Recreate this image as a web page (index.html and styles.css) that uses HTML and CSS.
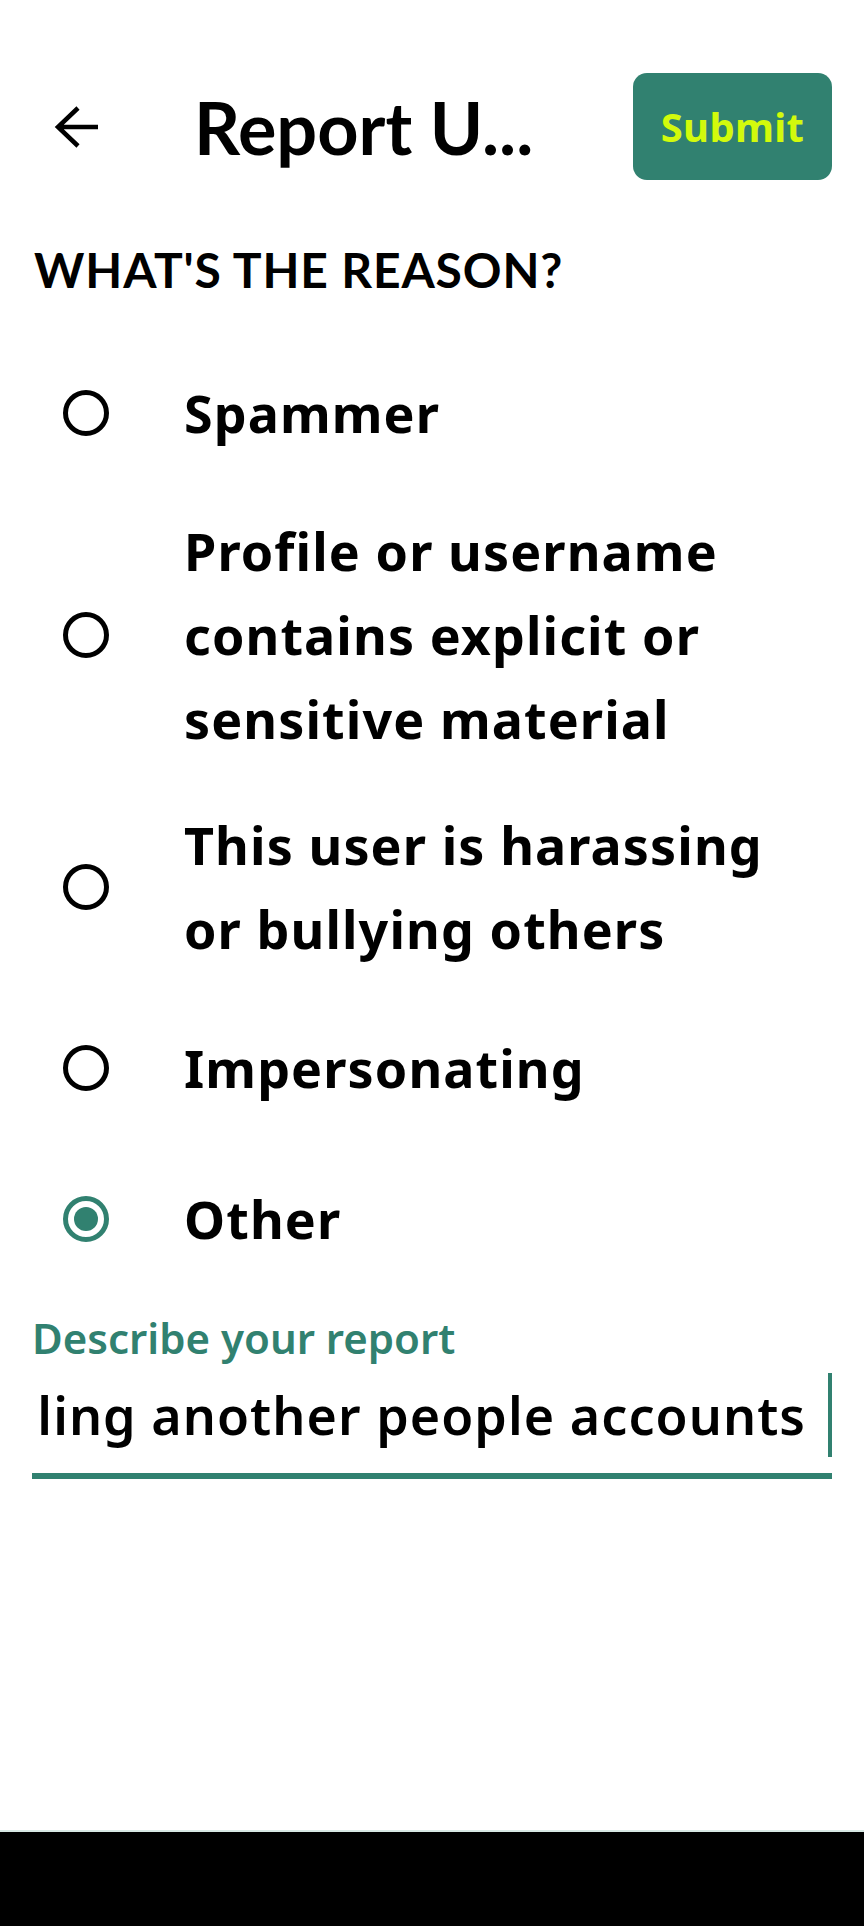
FILE: index.html
```html
<!DOCTYPE html>
<html lang="en">
<head>
<meta charset="utf-8">
<title>Report User</title>
<link rel="stylesheet" href="styles.css">
</head>
<body>
<div class="screen">
  <header class="topbar">
    <button class="back" aria-label="Back">
      <svg viewBox="0 0 44 44" width="44" height="44">
        <path d="M44 22H3M24 3L4 22L24 41" fill="none" stroke="#000" stroke-width="4.5" stroke-linejoin="miter"/>
      </svg>
    </button>
    <h1 class="title">Report U...</h1>
    <button class="submit">Submit</button>
  </header>

  <main class="content">
    <h2 class="section">WHAT'S THE REASON?</h2>
    <ul class="options">
      <li class="option"><span class="radio"></span><span class="label">Spammer</span></li>
      <li class="option"><span class="radio"></span><span class="label">Profile or username contains explicit or sensitive material</span></li>
      <li class="option"><span class="radio"></span><span class="label">This user is harassing or bullying others</span></li>
      <li class="option"><span class="radio"></span><span class="label">Impersonating</span></li>
      <li class="option selected"><span class="radio"></span><span class="label">Other</span></li>
    </ul>

    <div class="field">
      <div class="field-label">Describe your report</div>
      <div class="field-input">
        <span class="field-value">ling another people accounts</span>
        <span class="cursor"></span>
      </div>
    </div>
  </main>

  <div class="navbar"></div>
</div>
</body>
</html>
```
FILE: styles.css
```css
* { box-sizing: border-box; }

html, body {
  margin: 0;
  padding: 0;
  background: #fff;
}

.screen {
  width: 864px;
  height: 1926px;
  display: flex;
  flex-direction: column;
  background: #fff;
  color: #000;
  overflow: hidden;
}

.topbar {
  display: flex;
  align-items: center;
  height: 107px;
  margin-top: 73px;
  padding: 0 32px 0 54px;
}

.back {
  width: 44px;
  height: 44px;
  padding: 0;
  border: 0;
  background: none;
  display: flex;
}

.title {
  flex: 1;
  margin: 0 0 0 96px;
  font-family: Lato, "Liberation Sans", sans-serif;
  font-weight: 700;
  font-size: 72px;
  line-height: 1;
  white-space: nowrap;
}

.submit {
  width: 199px;
  height: 107px;
  border: 0;
  border-radius: 14px;
  background: #318170;
  color: #d2fa0c;
  font-family: "Noto Sans", sans-serif;
  font-weight: 700;
  font-size: 40px;
  letter-spacing: 0.3px;
  padding: 0;
}

.content {
  flex: 1;
}

.section {
  margin: 66px 0 0 34px;
  font-family: Lato, "Liberation Sans", sans-serif;
  font-weight: 700;
  font-size: 48px;
  letter-spacing: 0.85px;
  line-height: 1;
}

.options {
  list-style: none;
  margin: 43px 0 0;
  padding: 0;
}

.option {
  display: flex;
  align-items: center;
  min-height: 151px;
  padding: 21px 32px 21px 63px;
}

.radio {
  flex: none;
  width: 46px;
  height: 46px;
  border: 5px solid #000;
  border-radius: 50%;
  margin-right: 75px;
  display: flex;
  align-items: center;
  justify-content: center;
}

.selected .radio {
  border-color: #318170;
}

.selected .radio::after {
  content: "";
  width: 24px;
  height: 24px;
  border-radius: 50%;
  background: #318170;
}

.label {
  font-family: "Noto Sans", sans-serif;
  font-weight: 700;
  font-size: 52px;
  line-height: 84px;
  letter-spacing: 1.1px;
}

.field {
  margin: 23px 32px 0;
}

.field-label {
  font-family: "Noto Sans", sans-serif;
  font-weight: 600;
  font-size: 42px;
  line-height: 1;
  color: #318170;
}

.field-input {
  display: flex;
  align-items: center;
  justify-content: flex-end;
  gap: 22px;
  height: 106px;
  margin-top: 14px;
  padding-bottom: 16px;
  border-bottom: 6px solid #318170;
  overflow: hidden;
}

.field-value {
  font-family: "Noto Sans", sans-serif;
  font-weight: 600;
  font-size: 52px;
  letter-spacing: 1.05px;
  line-height: 84px;
  white-space: nowrap;
}

.cursor {
  flex: none;
  width: 4px;
  height: 84px;
  background: #318170;
}

.navbar {
  flex: none;
  height: 96px;
  border-top: 2px solid #d8e9e4;
  background: #000;
}
```
